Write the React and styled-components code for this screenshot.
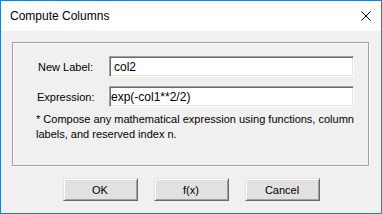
import React from "react";
import styled, { createGlobalStyle } from "styled-components";

const GlobalStyle = createGlobalStyle`
  html, body {
    margin: 0;
    padding: 0;
    background: #ffffff;
  }
  * {
    box-sizing: border-box;
  }
`;

const Window = styled.div`
  width: 382px;
  height: 214px;
  border: 1px solid #1883d7;
  display: flex;
  flex-direction: column;
  background: #f0f0f0;
  font-family: "Liberation Sans", Arial, sans-serif;
  color: #000;
`;

const TitleBar = styled.div`
  height: 30px;
  background: #ffffff;
  display: flex;
  align-items: center;
  justify-content: space-between;
  padding: 0 10px 0 9px;
  font-size: 12px;
  flex-shrink: 0;
`;

const Body = styled.div`
  flex: 1;
  display: flex;
  flex-direction: column;
  padding: 11px 12px 0 11px;
`;

const GroupBox = styled.div`
  height: 124px;
  border: 1px solid #a0a0a0;
  box-shadow: inset 1px 1px #ffffff, 1px 1px #ffffff;
  padding: 13px 14px 0 24px;
  display: flex;
  flex-direction: column;
`;

const FieldRow = styled.div`
  display: flex;
  align-items: center;
  margin-bottom: ${(p) => p.$gap}px;
`;

const Label = styled.div`
  width: 72px;
  padding-left: ${(p) => p.$indent}px;
  font-size: 11px;
`;

const TextBox = styled.div`
  flex: 1;
  height: 21px;
  background: #ffffff;
  border-style: solid;
  border-width: 1px;
  border-color: #a0a0a0 #ffffff #ffffff #a0a0a0;
  box-shadow: inset 1px 1px #696969, inset -1px -1px #e3e3e3;
  display: flex;
  align-items: center;
  padding-left: ${(p) => p.$pad}px;
  font-size: 12px;
  white-space: nowrap;
  overflow: hidden;
`;

const Note = styled.div`
  margin-top: 5px;
  margin-left: -1px;
  font-size: 11px;
  line-height: 15px;
`;

const ButtonRow = styled.div`
  display: flex;
  justify-content: center;
  gap: 16px;
  margin-top: 12px;
  padding-left: 1px;
`;

const Button = styled.button`
  width: 75px;
  height: 23px;
  background: #e1e1e1;
  border-style: solid;
  border-width: 1px;
  border-color: #e3e3e3 #696969 #696969 #e3e3e3;
  box-shadow: inset 1px 1px #ffffff, inset -1px -1px #a0a0a0;
  font-family: "Liberation Sans", Arial, sans-serif;
  font-size: 11px;
  color: #000;
  padding: 0;
`;

const CloseIcon = () => (
  <svg width="10" height="10" viewBox="0 0 10 10">
    <path d="M0.5 0.5 L9.5 9.5 M9.5 0.5 L0.5 9.5" stroke="#000" strokeWidth="1" />
  </svg>
);

export default function App() {
  return (
    <>
      <GlobalStyle />
      <Window>
        <TitleBar>
          <span>Compute Columns</span>
          <CloseIcon />
        </TitleBar>
        <Body>
          <GroupBox>
            <FieldRow $gap={9}>
              <Label $indent={1}>New Label:</Label>
              <TextBox $pad={4}>col2</TextBox>
            </FieldRow>
            <FieldRow $gap={0}>
              <Label $indent={0}>Expression:</Label>
              <TextBox $pad={1}>exp(-col1**2/2)</TextBox>
            </FieldRow>
            <Note>
              * Compose any mathematical expression using functions, column
              <br />
              labels, and reserved index n.
            </Note>
          </GroupBox>
          <ButtonRow>
            <Button>OK</Button>
            <Button>f(x)</Button>
            <Button>Cancel</Button>
          </ButtonRow>
        </Body>
      </Window>
    </>
  );
}
